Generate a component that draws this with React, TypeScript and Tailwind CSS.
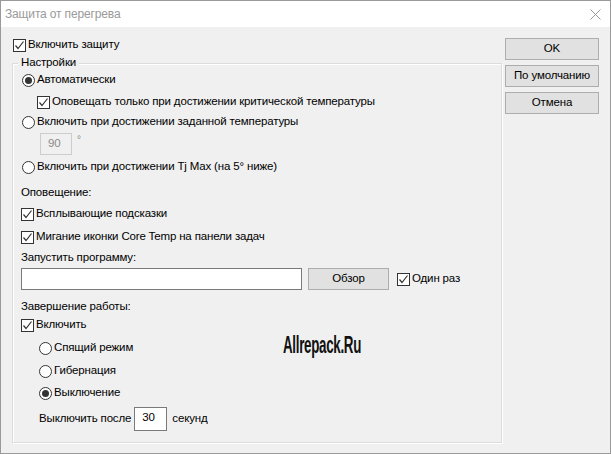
import React from 'react'

const Check: React.FC<{ checked?: boolean }> = ({ checked }) => (
  <span className="flex h-[13px] w-[13px] shrink-0 items-center justify-center border border-[#333] bg-white">
    {checked && (
      <svg width="11" height="11" viewBox="0 0 11 11">
        <path d="M1.5 5.5 L4 8.5 L9.5 1.5" fill="none" stroke="#333" strokeWidth="1.2" />
      </svg>
    )}
  </span>
)

const Radio: React.FC<{ checked?: boolean }> = ({ checked }) => (
  <span className="flex h-[13px] w-[13px] shrink-0 items-center justify-center rounded-full border border-[#333] bg-white">
    {checked && <span className="h-[7px] w-[7px] rounded-full bg-[#333]" />}
  </span>
)

const CheckRow: React.FC<{ checked?: boolean; label: string; className?: string }> = ({ checked, label, className }) => (
  <div className={`flex h-[16px] items-center gap-[2px] ${className ?? ''}`}>
    <Check checked={checked} />
    <span>{label}</span>
  </div>
)

const RadioRow: React.FC<{ checked?: boolean; label: string; className?: string }> = ({ checked, label, className }) => (
  <div className={`flex h-[16px] items-center gap-[2px] ${className ?? ''}`}>
    <Radio checked={checked} />
    <span>{label}</span>
  </div>
)

const Button: React.FC<{ label: string; className?: string }> = ({ label, className }) => (
  <div className={`flex h-[22px] items-center justify-center border border-[#adadad] bg-[#e1e1e1] ${className ?? ''}`}>
    {label}
  </div>
)

export default function App() {
  return (
    <div className="flex h-[454px] w-[611px] flex-col border border-[#9a9a9a] bg-[#f0f0f0] font-['Liberation_Sans',sans-serif] text-[11.5px] leading-none tracking-[-0.15px] text-black">
      {/* title bar */}
      <div className="flex h-[26px] shrink-0 items-center justify-between bg-white pl-[4px] pr-[9px]">
        <span className="text-[12px] text-[#9a9a9a]">Защита от перегрева</span>
        <svg width="11" height="11" viewBox="0 0 11 11">
          <path d="M0.5 0.5 L10.5 10.5 M10.5 0.5 L0.5 10.5" stroke="#9a9a9a" strokeWidth="1" />
        </svg>
      </div>

      <div className="flex flex-1 gap-[3px] pl-[11px]">
        {/* left column */}
        <div className="flex w-[490px] flex-col">
          <CheckRow checked label="Включить защиту" className="mt-[10px] ml-[1px]" />

          <div className="relative mt-[10px] flex h-[380px] flex-col border border-[#dcdcdc] pl-[8px] shadow-[inset_1px_1px_0_#fff,1px_1px_0_#fff]">
            <span className="absolute -top-[7px] left-[5px] bg-[#f0f0f0] px-[3px]">Настройки</span>

            <RadioRow checked label="Автоматически" className="mt-[8px] ml-[1px]" />
            <CheckRow checked label="Оповещать только при достижении критической температуры" className="mt-[6px] ml-[16px]" />
            <RadioRow label="Включить при достижении заданной температуры" className="mt-[4px] ml-[1px]" />
            <div className="mt-[3px] ml-[19px] flex items-start gap-[5px]">
              <div className="flex h-[22px] w-[32px] items-center border border-[#cccccc] pl-[7px] text-[#8a8a8a]">90</div>
              <span className="mt-[2px] text-[10px] text-[#8a8a8a]">°</span>
            </div>
            <RadioRow label="Включить при достижении Tj Max (на 5° ниже)" className="mt-[4px] ml-[1px]" />

            <div className="mt-[10px] flex h-[16px] items-center">Оповещение:</div>
            <CheckRow checked label="Всплывающие подсказки" className="mt-[5px]" />
            <CheckRow checked label="Мигание иконки Core Temp на панели задач" className="mt-[7px]" />

            <div className="mt-[5px] flex h-[16px] items-center">Запустить программу:</div>
            <div className="mt-[2px] flex items-center">
              <div className="h-[22px] w-[281px] border border-[#7a7a7a] bg-white" />
              <Button label="Обзор" className="ml-[6px] w-[81px]" />
              <CheckRow checked label="Один раз" className="ml-[8px]" />
            </div>

            <div className="mt-[9px] flex h-[16px] items-center">Завершение работы:</div>
            <CheckRow checked label="Включить" className="mt-[2px]" />
            <RadioRow label="Спящий режим" className="mt-[7px] ml-[18px]" />
            <RadioRow label="Гибернация" className="mt-[7px] ml-[18px]" />
            <RadioRow checked label="Выключение" className="mt-[6px] ml-[18px]" />
            <div className="mt-[6px] ml-[18px] flex items-center">
              <span>Выключить после</span>
              <div className="ml-[3px] h-[24px] w-[33px] border border-[#7a7a7a] bg-white pl-[7px] pt-[4px]">30</div>
              <span className="ml-[5px]">секунд</span>
            </div>

            <span className="absolute left-[270px] top-[270px] origin-left scale-x-[0.58] font-['Liberation_Sans',sans-serif] text-[23px] font-bold tracking-[-0.5px] text-[#111]">
              Allrepack.Ru
            </span>
          </div>
        </div>

        {/* right column */}
        <div className="mt-[11px] flex w-[94px] flex-col gap-[5px]">
          <Button label="OK" />
          <Button label="По умолчанию" />
          <Button label="Отмена" />
        </div>
      </div>
    </div>
  )
}
